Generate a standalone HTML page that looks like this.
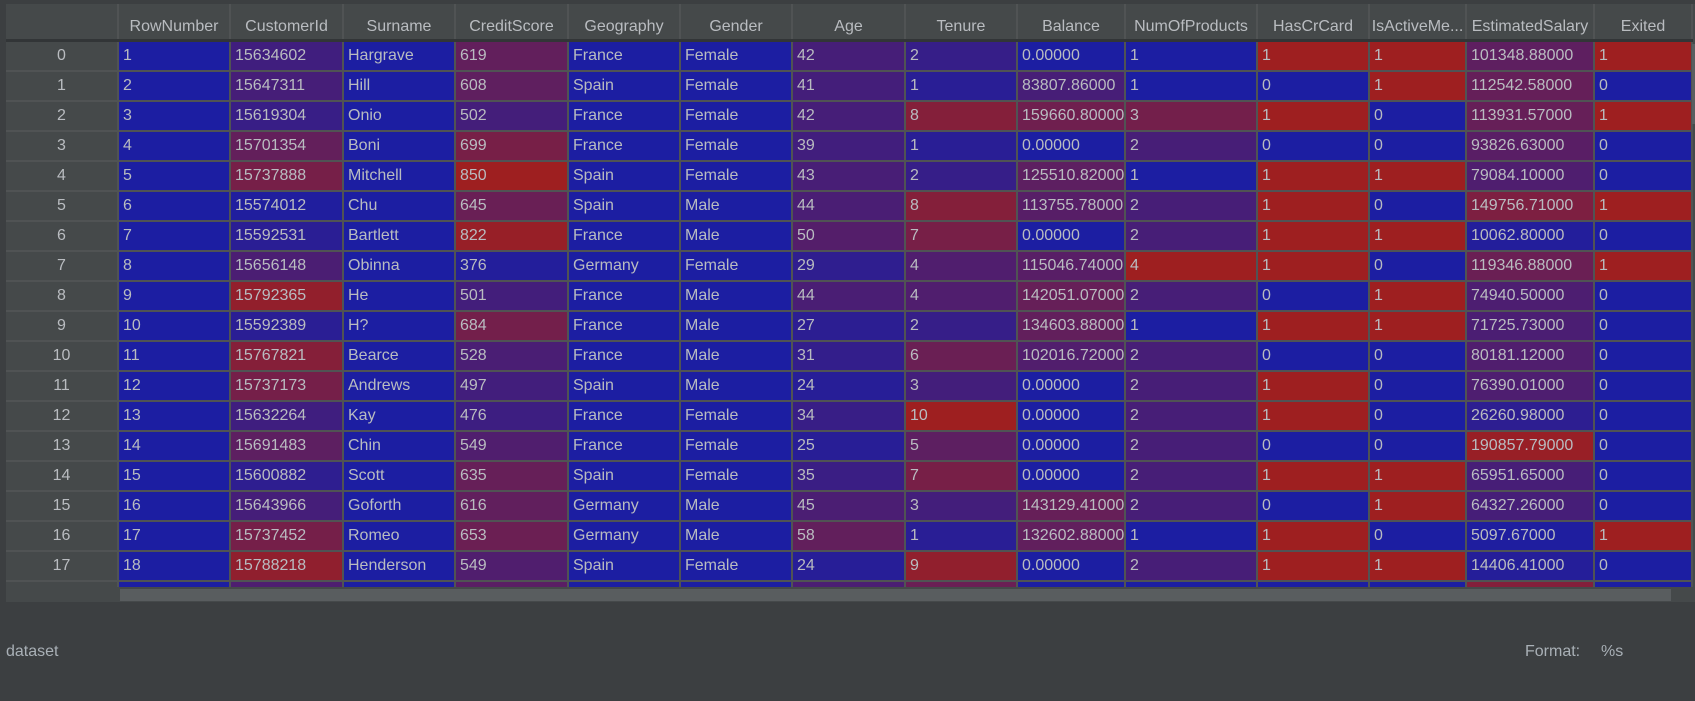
<!DOCTYPE html>
<html><head><meta charset="utf-8">
<style>
html,body{margin:0;padding:0;background:#3c3f41;width:1695px;height:701px;overflow:hidden;font-family:"Liberation Sans",sans-serif;}
#wrap{position:absolute;left:6px;top:4px;width:1689px;height:598px;background:#45494a;overflow:hidden;}
#clip{position:absolute;left:0;top:0;width:1689px;height:583px;overflow:hidden;}
table{position:absolute;left:0;top:0;border-collapse:collapse;table-layout:fixed;width:1686px;}
td,th{border:2px solid #505354;padding:0 0 0 4px;font-size:16px;color:#b9bcc0;white-space:nowrap;overflow:hidden;text-overflow:clip;height:28px;line-height:28px;font-weight:normal;box-sizing:border-box;}
td{height:30px;}
th{height:36px;line-height:24px;padding:9px 0 0 0;text-align:center;background:#45494a;border-top:none;border-bottom:3px solid #323537;vertical-align:bottom;}
th:first-child{border-left:none}
td.i{text-align:center;background:#45494a;padding:0;border-left:none}
#hs{position:absolute;left:114px;top:585px;width:1551px;height:12px;background:#595d5f;}
#vs{position:absolute;left:1686px;top:40px;width:4px;height:80px;background:#5a5e60;}
.lbl{position:absolute;top:643px;font-size:16px;color:#a9b0b6;}
</style></head><body>
<div id="wrap">
<div id="clip">
<table id="t">
<colgroup><col style="width:112px"><col style="width:112px"><col style="width:113px"><col style="width:112px"><col style="width:113px"><col style="width:112px"><col style="width:112px"><col style="width:113px"><col style="width:112px"><col style="width:108px"><col style="width:132px"><col style="width:112px"><col style="width:97px"><col style="width:128px"><col style="width:98px"></colgroup>
<tr><th></th><th>RowNumber</th><th>CustomerId</th><th>Surname</th><th>CreditScore</th><th>Geography</th><th>Gender</th><th>Age</th><th>Tenure</th><th>Balance</th><th>NumOfProducts</th><th>HasCrCard</th><th>IsActiveMe...</th><th>EstimatedSalary</th><th>Exited</th></tr>
<tbody id="b">
<tr><td class="i">0</td><td>1</td><td>15634602</td><td>Hargrave</td><td>619</td><td>France</td><td>Female</td><td>42</td><td>2</td><td>0.00000</td><td>1</td><td>1</td><td>1</td><td>101348.88000</td><td>1</td></tr>
<tr><td class="i">1</td><td>2</td><td>15647311</td><td>Hill</td><td>608</td><td>Spain</td><td>Female</td><td>41</td><td>1</td><td>83807.86000</td><td>1</td><td>0</td><td>1</td><td>112542.58000</td><td>0</td></tr>
<tr><td class="i">2</td><td>3</td><td>15619304</td><td>Onio</td><td>502</td><td>France</td><td>Female</td><td>42</td><td>8</td><td>159660.80000</td><td>3</td><td>1</td><td>0</td><td>113931.57000</td><td>1</td></tr>
<tr><td class="i">3</td><td>4</td><td>15701354</td><td>Boni</td><td>699</td><td>France</td><td>Female</td><td>39</td><td>1</td><td>0.00000</td><td>2</td><td>0</td><td>0</td><td>93826.63000</td><td>0</td></tr>
<tr><td class="i">4</td><td>5</td><td>15737888</td><td>Mitchell</td><td>850</td><td>Spain</td><td>Female</td><td>43</td><td>2</td><td>125510.82000</td><td>1</td><td>1</td><td>1</td><td>79084.10000</td><td>0</td></tr>
<tr><td class="i">5</td><td>6</td><td>15574012</td><td>Chu</td><td>645</td><td>Spain</td><td>Male</td><td>44</td><td>8</td><td>113755.78000</td><td>2</td><td>1</td><td>0</td><td>149756.71000</td><td>1</td></tr>
<tr><td class="i">6</td><td>7</td><td>15592531</td><td>Bartlett</td><td>822</td><td>France</td><td>Male</td><td>50</td><td>7</td><td>0.00000</td><td>2</td><td>1</td><td>1</td><td>10062.80000</td><td>0</td></tr>
<tr><td class="i">7</td><td>8</td><td>15656148</td><td>Obinna</td><td>376</td><td>Germany</td><td>Female</td><td>29</td><td>4</td><td>115046.74000</td><td>4</td><td>1</td><td>0</td><td>119346.88000</td><td>1</td></tr>
<tr><td class="i">8</td><td>9</td><td>15792365</td><td>He</td><td>501</td><td>France</td><td>Male</td><td>44</td><td>4</td><td>142051.07000</td><td>2</td><td>0</td><td>1</td><td>74940.50000</td><td>0</td></tr>
<tr><td class="i">9</td><td>10</td><td>15592389</td><td>H?</td><td>684</td><td>France</td><td>Male</td><td>27</td><td>2</td><td>134603.88000</td><td>1</td><td>1</td><td>1</td><td>71725.73000</td><td>0</td></tr>
<tr><td class="i">10</td><td>11</td><td>15767821</td><td>Bearce</td><td>528</td><td>France</td><td>Male</td><td>31</td><td>6</td><td>102016.72000</td><td>2</td><td>0</td><td>0</td><td>80181.12000</td><td>0</td></tr>
<tr><td class="i">11</td><td>12</td><td>15737173</td><td>Andrews</td><td>497</td><td>Spain</td><td>Male</td><td>24</td><td>3</td><td>0.00000</td><td>2</td><td>1</td><td>0</td><td>76390.01000</td><td>0</td></tr>
<tr><td class="i">12</td><td>13</td><td>15632264</td><td>Kay</td><td>476</td><td>France</td><td>Female</td><td>34</td><td>10</td><td>0.00000</td><td>2</td><td>1</td><td>0</td><td>26260.98000</td><td>0</td></tr>
<tr><td class="i">13</td><td>14</td><td>15691483</td><td>Chin</td><td>549</td><td>France</td><td>Female</td><td>25</td><td>5</td><td>0.00000</td><td>2</td><td>0</td><td>0</td><td>190857.79000</td><td>0</td></tr>
<tr><td class="i">14</td><td>15</td><td>15600882</td><td>Scott</td><td>635</td><td>Spain</td><td>Female</td><td>35</td><td>7</td><td>0.00000</td><td>2</td><td>1</td><td>1</td><td>65951.65000</td><td>0</td></tr>
<tr><td class="i">15</td><td>16</td><td>15643966</td><td>Goforth</td><td>616</td><td>Germany</td><td>Male</td><td>45</td><td>3</td><td>143129.41000</td><td>2</td><td>0</td><td>1</td><td>64327.26000</td><td>0</td></tr>
<tr><td class="i">16</td><td>17</td><td>15737452</td><td>Romeo</td><td>653</td><td>Germany</td><td>Male</td><td>58</td><td>1</td><td>132602.88000</td><td>1</td><td>1</td><td>0</td><td>5097.67000</td><td>1</td></tr>
<tr><td class="i">17</td><td>18</td><td>15788218</td><td>Henderson</td><td>549</td><td>Spain</td><td>Female</td><td>24</td><td>9</td><td>0.00000</td><td>2</td><td>1</td><td>1</td><td>14406.41000</td><td>0</td></tr>
<tr><td class="i">18</td><td>19</td><td>15661507</td><td>Muldoon</td><td>587</td><td>Spain</td><td>Male</td><td>45</td><td>6</td><td>0.00000</td><td>1</td><td>0</td><td>0</td><td>158684.81000</td><td>0</td></tr>
</tbody></table>
</div>
<div id="hs"></div>
<div id="vs"></div>
</div>
<div class="lbl" style="left:6px">dataset</div>
<div class="lbl" style="left:1525px">Format:</div>
<div class="lbl" style="left:1601px">%s</div>
<script>
var mm=[[1,10000],[15565701,15815690],null,[350,850],null,null,[18,92],[0,10],[0,250898],[1,4],[0,1],[0,1],[11.58,199992.48],[0,1]];
var B=[28,30,162],R=[158,31,32];
var rows=document.getElementById('b').rows;
for(var r=0;r<rows.length;r++){for(var c=1;c<rows[r].cells.length;c++){var td=rows[r].cells[c];var m=mm[c-1];var t=0;
if(m){t=(parseFloat(td.textContent)-m[0])/(m[1]-m[0]);t=Math.max(0,Math.min(1,t));}
var col=B.map(function(b,k){return Math.round(b+(R[k]-b)*t)});
td.style.background='rgb('+col.join(',')+')';}}
</script>
</body></html>
